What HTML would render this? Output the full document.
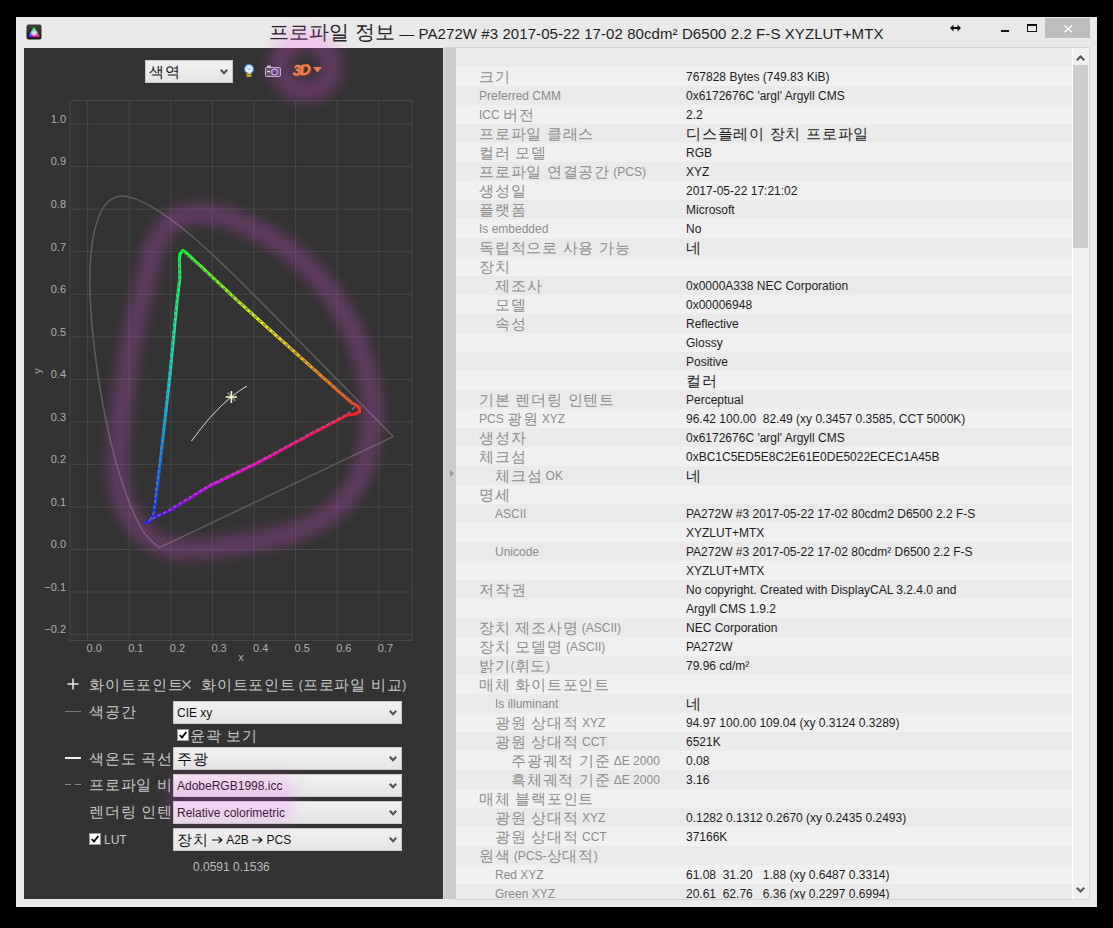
<!DOCTYPE html>
<html><head><meta charset="utf-8">
<style>
html,body{margin:0;padding:0;}
body{width:1113px;height:928px;background:#000;position:relative;overflow:hidden;font-family:"Liberation Sans",sans-serif;}
.abs{position:absolute;}
#win{left:16px;top:17px;width:1081px;height:890px;background:#e9e9e9;}
#title{left:0;top:17px;width:1113px;height:31px;}
#title .t{position:absolute;left:269px;top:8px;letter-spacing:0.08px;font-size:15px;color:#1e1e1e;white-space:pre;line-height:18px;}
.k{font-size:15px;letter-spacing:0.75px;line-height:1px;position:relative;top:1px;}
.kt{font-size:20px;letter-spacing:0.05px;line-height:1px;position:relative;top:0px;}
#left{left:24px;top:48px;width:419px;height:851px;background:#333333;overflow:hidden;}
#split{left:443px;top:47px;width:13px;height:852px;border-top:1px solid #d5d5d5;background:#cccccc;border-left:1px solid #d8d8d8;box-sizing:border-box;}
#list{left:456px;top:47px;width:634px;height:853px;background:#f0f0f0;border-top:1px solid #d5d5d5;border-right:1px solid #d5d5d5;border-bottom:1px solid #d5d5d5;box-sizing:border-box;overflow:hidden;}
.row{position:absolute;left:0;width:616px;height:19px;font-size:12px;line-height:19px;white-space:pre;}
.row.o{background:#eaeaea;}
.row .l{position:absolute;color:#8c8c8c;top:1px;}
.row .v{position:absolute;left:230px;color:#1c1c1c;top:1px;}
#sb{left:1072px;top:48px;width:17px;height:851px;background:#f0f0f0;border-left:1px solid #ffffff;box-sizing:border-box;}
.dd{position:absolute;height:23px;background:linear-gradient(#f2f2f2,#e4e4e4);box-shadow:inset 0 0 0 1px #c8c8c8;font-size:12px;line-height:24px;color:#111;white-space:pre;box-sizing:border-box;padding-left:4px;}
.dd svg.chev{position:absolute;right:5px;top:9px;}
.lab{position:absolute;font-size:12px;color:#c9c9c9;white-space:pre;line-height:16px;}
svg text{font-family:"Liberation Sans",sans-serif;}
</style></head><body>
<div id="win" class="abs"></div>
<div id="title" class="abs">
  <svg class="abs" style="left:26px;top:7px" width="16" height="16" viewBox="0 0 16 16">
    <defs>
      <linearGradient id="ig" x1="0" y1="0" x2="0" y2="1"><stop offset="0" stop-color="#404040"/><stop offset="1" stop-color="#1c1c1c"/></linearGradient>
      <linearGradient id="gR" gradientUnits="userSpaceOnUse" x1="14.5" y1="13" x2="5" y2="7.5"><stop offset="0" stop-color="#ff0000"/><stop offset="0.55" stop-color="#c00060"/><stop offset="1" stop-color="#000000"/></linearGradient>
      <linearGradient id="gG" gradientUnits="userSpaceOnUse" x1="8" y1="2.5" x2="8" y2="13"><stop offset="0" stop-color="#00ff00"/><stop offset="0.55" stop-color="#00c080"/><stop offset="1" stop-color="#000000"/></linearGradient>
      <linearGradient id="gB" gradientUnits="userSpaceOnUse" x1="1.5" y1="13" x2="11" y2="7.5"><stop offset="0" stop-color="#0000ff"/><stop offset="0.55" stop-color="#6000c0"/><stop offset="1" stop-color="#000000"/></linearGradient>
    </defs>
    <rect x="0.5" y="0.5" width="15" height="15" rx="2" fill="url(#ig)"/>
    <g style="isolation:isolate">
    <path d="M8,2.5 L14.5,13 L1.5,13 Z" fill="#000"/>
    <path d="M8,2.5 L14.5,13 L1.5,13 Z" fill="url(#gR)" style="mix-blend-mode:screen"/>
    <path d="M8,2.5 L14.5,13 L1.5,13 Z" fill="url(#gG)" style="mix-blend-mode:screen"/>
    <path d="M8,2.5 L14.5,13 L1.5,13 Z" fill="url(#gB)" style="mix-blend-mode:screen"/>
    </g>
    <radialGradient id="gW" cx="8" cy="9.3" r="3.2" gradientUnits="userSpaceOnUse"><stop offset="0" stop-color="#fff" stop-opacity="0.95"/><stop offset="1" stop-color="#fff" stop-opacity="0"/></radialGradient>
    <circle cx="8" cy="9.3" r="3.2" fill="url(#gW)"/>
  </svg>
  <div class="t"><span class="kt">프로파일 정보</span> — PA272W #3 2017-05-22 17-02 80cdm² D6500 2.2 F-S XYZLUT+MTX</div>
  <svg class="abs" style="left:950px;top:7px" width="11" height="8" viewBox="0 0 11 8"><path d="M0,4 L3.5,0.5 L3.5,3 L7.5,3 L7.5,0.5 L11,4 L7.5,7.5 L7.5,5 L3.5,5 L3.5,7.5 Z" fill="#111"/></svg>
  <div class="abs" style="left:1001px;top:13px;width:8px;height:2px;background:#111;"></div>
  <div class="abs" style="left:1027px;top:7px;width:10px;height:8px;border:1px solid #111;border-top-width:2px;box-sizing:border-box;"></div>
  <div class="abs" style="left:1045px;top:1px;width:45px;height:20px;background:#bdbdbd;"></div>
  <svg class="abs" style="left:1064px;top:8px" width="9" height="8" viewBox="0 0 9 8"><path d="M0.5,0.5 L8,7.3 M8,0.5 L0.5,7.3" stroke="#fff" stroke-width="1.2"/></svg>
</div>
<div id="left" class="abs">
  <svg class="abs" style="left:-24px;top:-48px" width="1113" height="928" viewBox="0 0 1113 928">
    <rect x="70" y="100.5" width="342" height="540" fill="none" stroke="#474747" stroke-width="1"/>
    <g stroke="#474747" stroke-width="1"><line x1="87.6" y1="100.5" x2="87.6" y2="640.5"/><line x1="129.2" y1="100.5" x2="129.2" y2="640.5"/><line x1="170.8" y1="100.5" x2="170.8" y2="640.5"/><line x1="212.4" y1="100.5" x2="212.4" y2="640.5"/><line x1="254.0" y1="100.5" x2="254.0" y2="640.5"/><line x1="295.6" y1="100.5" x2="295.6" y2="640.5"/><line x1="337.2" y1="100.5" x2="337.2" y2="640.5"/><line x1="378.8" y1="100.5" x2="378.8" y2="640.5"/><line x1="70.5" y1="634.6" x2="412" y2="634.6"/><line x1="70.5" y1="592.0" x2="412" y2="592.0"/><line x1="70.5" y1="549.5" x2="412" y2="549.5"/><line x1="70.5" y1="507.0" x2="412" y2="507.0"/><line x1="70.5" y1="464.4" x2="412" y2="464.4"/><line x1="70.5" y1="421.9" x2="412" y2="421.9"/><line x1="70.5" y1="379.3" x2="412" y2="379.3"/><line x1="70.5" y1="336.8" x2="412" y2="336.8"/><line x1="70.5" y1="294.3" x2="412" y2="294.3"/><line x1="70.5" y1="251.7" x2="412" y2="251.7"/><line x1="70.5" y1="209.2" x2="412" y2="209.2"/><line x1="70.5" y1="166.6" x2="412" y2="166.6"/><line x1="70.5" y1="124.1" x2="412" y2="124.1"/></g>
    <g fill="#b0b0b0" font-size="11"><text x="66" y="633.4" text-anchor="end">−0.2</text><text x="66" y="590.8" text-anchor="end">−0.1</text><text x="66" y="548.3" text-anchor="end">0.0</text><text x="66" y="505.8" text-anchor="end">0.1</text><text x="66" y="463.2" text-anchor="end">0.2</text><text x="66" y="420.7" text-anchor="end">0.3</text><text x="66" y="378.1" text-anchor="end">0.4</text><text x="66" y="335.6" text-anchor="end">0.5</text><text x="66" y="293.1" text-anchor="end">0.6</text><text x="66" y="250.5" text-anchor="end">0.7</text><text x="66" y="208.0" text-anchor="end">0.8</text><text x="66" y="165.4" text-anchor="end">0.9</text><text x="66" y="122.9" text-anchor="end">1.0</text><text x="86.6" y="651.5">0.0</text><text x="128.2" y="651.5">0.1</text><text x="169.8" y="651.5">0.2</text><text x="211.4" y="651.5">0.3</text><text x="253.0" y="651.5">0.4</text><text x="294.6" y="651.5">0.5</text><text x="336.2" y="651.5">0.6</text><text x="377.8" y="651.5">0.7</text></g>
    <text x="241" y="661" fill="#a8a8a8" font-size="11" text-anchor="middle">x</text>
    <text transform="translate(41,371) rotate(-90)" fill="#a8a8a8" font-size="11" text-anchor="middle">y</text>
    <path d="M160.0,547.4 Q160.0,547.4 159.9,547.4 Q159.9,547.4 159.9,547.4 Q159.8,547.4 159.8,547.4 Q159.7,547.5 159.6,547.5 Q159.6,547.5 159.5,547.5 Q159.4,547.5 159.3,547.5 Q159.2,547.5 159.0,547.4 Q158.9,547.3 158.7,547.2 Q158.4,547.0 158.2,546.8 Q157.9,546.6 157.4,546.2 Q157.0,545.8 156.5,545.4 Q156.0,544.9 155.3,544.2 Q154.6,543.6 153.7,542.8 Q152.7,542.0 151.6,540.9 Q150.4,539.8 149.0,538.4 Q147.5,536.9 145.7,534.7 Q144.0,532.5 141.6,528.7 Q139.2,524.9 136.2,518.7 Q133.2,512.6 129.4,502.8 Q125.6,493.0 120.9,478.6 Q116.2,464.1 111.3,444.1 Q106.5,424.0 101.9,399.0 Q97.4,373.9 94.2,347.2 Q91.0,320.5 90.1,295.7 Q89.2,270.9 91.3,250.7 Q93.4,230.4 98.6,217.2 Q103.8,204.1 111.1,199.4 Q118.5,194.8 126.8,196.4 Q135.1,198.0 143.5,202.4 Q152.0,206.7 159.9,211.8 Q167.8,217.0 175.5,222.8 Q183.1,228.6 190.6,235.0 Q198.2,241.4 205.6,248.2 Q213.1,255.0 220.5,262.1 Q227.9,269.2 235.4,276.5 Q242.8,283.8 250.2,291.3 Q257.6,298.7 265.0,306.1 Q272.3,313.5 279.6,320.9 Q286.8,328.2 293.8,335.4 Q300.8,342.5 307.5,349.3 Q314.2,356.2 320.6,362.6 Q326.9,369.0 332.6,374.9 Q338.4,380.8 343.4,385.9 Q348.4,391.0 352.8,395.5 Q357.3,400.0 360.9,403.7 Q364.6,407.4 367.5,410.5 Q370.5,413.5 372.9,415.9 Q375.3,418.3 377.2,420.3 Q379.0,422.2 380.6,423.7 Q382.1,425.3 383.4,426.6 Q384.6,427.9 385.7,428.9 Q386.7,430.0 387.5,430.8 Q388.4,431.7 389.0,432.3 Q389.6,432.9 390.4,433.8 Q391.3,434.6 391.7,435.1 Q392.1,435.5 392.4,435.8 Q392.7,436.1 393.0,436.4 L393.2,436.6 Z" fill="none" stroke="#5e5e5e" stroke-width="1.5" stroke-linejoin="round"/>
    <path d="M191.5,441.1 L192.4,439.9 L193.4,438.6 L194.3,437.2 L195.3,435.9 L196.4,434.5 L197.5,433.0 L198.6,431.6 L199.7,430.1 L200.9,428.6 L202.1,427.1 L203.4,425.5 L204.7,424.0 L206.0,422.4 L207.3,420.8 L208.7,419.2 L210.1,417.6 L211.5,416.0 L213.0,414.4 L214.5,412.8 L216.0,411.3 L217.5,409.7 L219.0,408.1 L220.6,406.6 L222.2,405.1 L223.8,403.6 L225.4,402.1 L227.0,400.7 L228.6,399.3 L230.3,397.9 L231.9,396.5 L233.5,395.2 L235.2,394.0 L236.8,392.7 L238.5,391.5 L240.1,390.4 L241.8,389.3 L243.4,388.2 L245.0,387.2 L246.7,386.2" fill="none" stroke="#e8e8e8" stroke-width="1"/>
    <g stroke-width="3" stroke-linecap="round"><line x1="182.8" y1="250.5" x2="186.3" y2="252.8" stroke="#05ff26"/><line x1="186.3" y1="252.8" x2="189.4" y2="255.7" stroke="#0eff23"/><line x1="189.4" y1="255.7" x2="192.5" y2="258.6" stroke="#17ff20"/><line x1="192.5" y1="258.6" x2="195.6" y2="261.5" stroke="#20ff1d"/><line x1="195.6" y1="261.5" x2="198.7" y2="264.4" stroke="#29ff1a"/><line x1="198.7" y1="264.4" x2="201.8" y2="267.2" stroke="#32ff17"/><line x1="201.8" y1="267.2" x2="204.9" y2="270.1" stroke="#3bff14"/><line x1="204.9" y1="270.1" x2="207.9" y2="273.0" stroke="#44ff11"/><line x1="207.9" y1="273.0" x2="211.0" y2="275.9" stroke="#4dff0e"/><line x1="211.0" y1="275.9" x2="214.1" y2="278.8" stroke="#56ff0b"/><line x1="214.1" y1="278.8" x2="217.2" y2="281.7" stroke="#5fff08"/><line x1="217.2" y1="281.7" x2="220.3" y2="284.6" stroke="#69ff05"/><line x1="220.3" y1="284.6" x2="223.4" y2="287.4" stroke="#72ff02"/><line x1="223.4" y1="287.4" x2="226.5" y2="290.3" stroke="#7bff00"/><line x1="226.5" y1="290.3" x2="229.5" y2="293.2" stroke="#84fe00"/><line x1="229.5" y1="293.2" x2="232.6" y2="296.1" stroke="#8efd00"/><line x1="232.6" y1="296.1" x2="235.7" y2="299.0" stroke="#98fc00"/><line x1="235.7" y1="299.0" x2="238.8" y2="301.9" stroke="#a1fb00"/><line x1="238.8" y1="301.9" x2="241.9" y2="304.7" stroke="#abfb00"/><line x1="241.9" y1="304.7" x2="245.1" y2="307.5" stroke="#b4fa00"/><line x1="245.1" y1="307.5" x2="248.2" y2="310.4" stroke="#bef900"/><line x1="248.2" y1="310.4" x2="251.4" y2="313.2" stroke="#c8f800"/><line x1="251.4" y1="313.2" x2="254.5" y2="316.0" stroke="#d1f700"/><line x1="254.5" y1="316.0" x2="257.7" y2="318.8" stroke="#dbf600"/><line x1="257.7" y1="318.8" x2="260.8" y2="321.7" stroke="#e4f600"/><line x1="260.8" y1="321.7" x2="264.0" y2="324.5" stroke="#ecf400"/><line x1="264.0" y1="324.5" x2="267.1" y2="327.3" stroke="#edef00"/><line x1="267.1" y1="327.3" x2="270.2" y2="330.1" stroke="#efea00"/><line x1="270.2" y1="330.1" x2="273.4" y2="332.9" stroke="#f0e600"/><line x1="273.4" y1="332.9" x2="276.5" y2="335.8" stroke="#f2e100"/><line x1="276.5" y1="335.8" x2="279.7" y2="338.6" stroke="#f4dd00"/><line x1="279.7" y1="338.6" x2="282.8" y2="341.4" stroke="#f6d800"/><line x1="282.8" y1="341.4" x2="286.0" y2="344.2" stroke="#f7d400"/><line x1="286.0" y1="344.2" x2="289.1" y2="347.0" stroke="#f9cf00"/><line x1="289.1" y1="347.0" x2="292.3" y2="349.9" stroke="#faca00"/><line x1="292.3" y1="349.9" x2="295.4" y2="352.7" stroke="#fcc600"/><line x1="295.4" y1="352.7" x2="298.6" y2="355.5" stroke="#fec100"/><line x1="298.6" y1="355.5" x2="301.7" y2="358.3" stroke="#ffbc00"/><line x1="301.7" y1="358.3" x2="304.9" y2="361.1" stroke="#ffb500"/><line x1="304.9" y1="361.1" x2="308.0" y2="364.0" stroke="#ffad00"/><line x1="308.0" y1="364.0" x2="311.2" y2="366.8" stroke="#ffa600"/><line x1="311.2" y1="366.8" x2="314.3" y2="369.6" stroke="#ff9f00"/><line x1="314.3" y1="369.6" x2="317.5" y2="372.4" stroke="#ff9800"/><line x1="317.5" y1="372.4" x2="320.6" y2="375.3" stroke="#ff9000"/><line x1="320.6" y1="375.3" x2="323.7" y2="378.1" stroke="#ff8900"/><line x1="323.7" y1="378.1" x2="326.9" y2="380.9" stroke="#ff8200"/><line x1="326.9" y1="380.9" x2="330.1" y2="383.7" stroke="#ff7b00"/><line x1="330.1" y1="383.7" x2="333.2" y2="386.5" stroke="#ff7300"/><line x1="333.2" y1="386.5" x2="336.4" y2="389.3" stroke="#ff6c00"/><line x1="336.4" y1="389.3" x2="339.6" y2="392.1" stroke="#ff6500"/><line x1="339.6" y1="392.1" x2="342.8" y2="394.9" stroke="#ff5e00"/><line x1="342.8" y1="394.9" x2="345.9" y2="397.6" stroke="#ff5602"/><line x1="345.9" y1="397.6" x2="349.1" y2="400.4" stroke="#ff4e05"/><line x1="349.1" y1="400.4" x2="352.3" y2="403.2" stroke="#ff4708"/><line x1="352.3" y1="403.2" x2="356.1" y2="405.0" stroke="#ff3f0c"/><line x1="356.1" y1="405.0" x2="359.3" y2="407.8" stroke="#ff370f"/><line x1="359.3" y1="407.8" x2="359.5" y2="411.7" stroke="#ff2f12"/><line x1="359.5" y1="411.7" x2="356.0" y2="413.7" stroke="#ff2716"/><line x1="356.0" y1="413.7" x2="351.9" y2="414.5" stroke="#ff2019"/><line x1="351.9" y1="414.5" x2="347.7" y2="414.9" stroke="#ff181c"/><line x1="347.7" y1="414.9" x2="344.3" y2="416.7" stroke="#ff142b"/><line x1="344.3" y1="416.7" x2="341.0" y2="418.4" stroke="#ff1331"/><line x1="341.0" y1="418.4" x2="337.6" y2="420.2" stroke="#ff1236"/><line x1="337.6" y1="420.2" x2="334.2" y2="422.0" stroke="#ff113c"/><line x1="334.2" y1="422.0" x2="330.8" y2="423.8" stroke="#ff1042"/><line x1="330.8" y1="423.8" x2="327.5" y2="425.5" stroke="#ff0f47"/><line x1="327.5" y1="425.5" x2="324.1" y2="427.3" stroke="#ff0e4d"/><line x1="324.1" y1="427.3" x2="320.7" y2="429.1" stroke="#ff0d53"/><line x1="320.7" y1="429.1" x2="317.4" y2="430.8" stroke="#ff0c59"/><line x1="317.4" y1="430.8" x2="314.0" y2="432.6" stroke="#ff0b5e"/><line x1="314.0" y1="432.6" x2="310.6" y2="434.4" stroke="#ff0a64"/><line x1="310.6" y1="434.4" x2="307.2" y2="436.2" stroke="#ff096a"/><line x1="307.2" y1="436.2" x2="303.9" y2="438.0" stroke="#ff086f"/><line x1="303.9" y1="438.0" x2="300.5" y2="439.8" stroke="#ff0775"/><line x1="300.5" y1="439.8" x2="297.2" y2="441.6" stroke="#ff067b"/><line x1="297.2" y1="441.6" x2="293.8" y2="443.4" stroke="#ff0581"/><line x1="293.8" y1="443.4" x2="290.5" y2="445.2" stroke="#ff0486"/><line x1="290.5" y1="445.2" x2="287.1" y2="447.0" stroke="#ff038c"/><line x1="287.1" y1="447.0" x2="283.8" y2="448.8" stroke="#ff0292"/><line x1="283.8" y1="448.8" x2="280.4" y2="450.7" stroke="#ff0197"/><line x1="280.4" y1="450.7" x2="277.1" y2="452.5" stroke="#ff009d"/><line x1="277.1" y1="452.5" x2="273.7" y2="454.3" stroke="#fe00a2"/><line x1="273.7" y1="454.3" x2="270.4" y2="456.1" stroke="#fc00a7"/><line x1="270.4" y1="456.1" x2="267.0" y2="457.9" stroke="#fb00ab"/><line x1="267.0" y1="457.9" x2="263.7" y2="459.7" stroke="#f900b0"/><line x1="263.7" y1="459.7" x2="260.3" y2="461.5" stroke="#f800b4"/><line x1="260.3" y1="461.5" x2="256.9" y2="463.2" stroke="#f600b8"/><line x1="256.9" y1="463.2" x2="253.5" y2="464.9" stroke="#f400bd"/><line x1="253.5" y1="464.9" x2="250.1" y2="466.5" stroke="#f200c1"/><line x1="250.1" y1="466.5" x2="246.6" y2="468.2" stroke="#f100c6"/><line x1="246.6" y1="468.2" x2="243.2" y2="469.8" stroke="#ef00ca"/><line x1="243.2" y1="469.8" x2="239.8" y2="471.5" stroke="#ee00cf"/><line x1="239.8" y1="471.5" x2="236.3" y2="473.1" stroke="#ec00d3"/><line x1="236.3" y1="473.1" x2="232.9" y2="474.8" stroke="#ea00d8"/><line x1="232.9" y1="474.8" x2="229.5" y2="476.4" stroke="#e800dc"/><line x1="229.5" y1="476.4" x2="226.0" y2="478.1" stroke="#e700e0"/><line x1="226.0" y1="478.1" x2="222.6" y2="479.7" stroke="#e500e5"/><line x1="222.6" y1="479.7" x2="219.2" y2="481.4" stroke="#e400e9"/><line x1="219.2" y1="481.4" x2="215.7" y2="483.0" stroke="#e200ee"/><line x1="215.7" y1="483.0" x2="212.3" y2="484.7" stroke="#dd00f1"/><line x1="212.3" y1="484.7" x2="208.9" y2="486.4" stroke="#d600f2"/><line x1="208.9" y1="486.4" x2="205.7" y2="488.4" stroke="#cf00f3"/><line x1="205.7" y1="488.4" x2="202.4" y2="490.4" stroke="#c800f4"/><line x1="202.4" y1="490.4" x2="199.2" y2="492.4" stroke="#c100f5"/><line x1="199.2" y1="492.4" x2="196.0" y2="494.4" stroke="#ba00f6"/><line x1="196.0" y1="494.4" x2="192.7" y2="496.4" stroke="#b300f7"/><line x1="192.7" y1="496.4" x2="189.5" y2="498.5" stroke="#ac00f8"/><line x1="189.5" y1="498.5" x2="186.3" y2="500.5" stroke="#a500f9"/><line x1="186.3" y1="500.5" x2="183.1" y2="502.5" stroke="#9e00fa"/><line x1="183.1" y1="502.5" x2="179.8" y2="504.5" stroke="#9700fb"/><line x1="179.8" y1="504.5" x2="176.6" y2="506.5" stroke="#9000fc"/><line x1="176.6" y1="506.5" x2="173.4" y2="508.6" stroke="#8900fe"/><line x1="173.4" y1="508.6" x2="170.1" y2="510.6" stroke="#8200ff"/><line x1="170.1" y1="510.6" x2="166.7" y2="512.2" stroke="#7503ff"/><line x1="166.7" y1="512.2" x2="163.2" y2="513.7" stroke="#6707ff"/><line x1="163.2" y1="513.7" x2="159.7" y2="515.2" stroke="#570bff"/><line x1="159.7" y1="515.2" x2="156.2" y2="516.7" stroke="#490fff"/><line x1="156.2" y1="516.7" x2="152.8" y2="518.5" stroke="#3914ff"/><line x1="152.8" y1="518.5" x2="149.7" y2="520.6" stroke="#2b18ff"/><line x1="149.7" y1="520.6" x2="146.5" y2="522.7" stroke="#1b1cff"/><line x1="146.5" y1="522.7" x2="150.5" y2="520.3" stroke="#1321ff"/><line x1="150.5" y1="520.3" x2="152.9" y2="516.4" stroke="#1227ff"/><line x1="152.9" y1="516.4" x2="154.4" y2="512.2" stroke="#112dff"/><line x1="154.4" y1="512.2" x2="154.9" y2="507.5" stroke="#0f33ff"/><line x1="154.9" y1="507.5" x2="155.5" y2="502.9" stroke="#0e39ff"/><line x1="155.5" y1="502.9" x2="156.0" y2="498.3" stroke="#0d3fff"/><line x1="156.0" y1="498.3" x2="156.5" y2="493.7" stroke="#0b45ff"/><line x1="156.5" y1="493.7" x2="157.1" y2="489.1" stroke="#0a4bff"/><line x1="157.1" y1="489.1" x2="157.6" y2="484.5" stroke="#0951ff"/><line x1="157.6" y1="484.5" x2="158.1" y2="479.9" stroke="#0757ff"/><line x1="158.1" y1="479.9" x2="158.7" y2="475.3" stroke="#065dff"/><line x1="158.7" y1="475.3" x2="159.2" y2="470.7" stroke="#0563ff"/><line x1="159.2" y1="470.7" x2="159.7" y2="466.1" stroke="#0369ff"/><line x1="159.7" y1="466.1" x2="160.3" y2="461.5" stroke="#026fff"/><line x1="160.3" y1="461.5" x2="160.8" y2="456.9" stroke="#0175ff"/><line x1="160.8" y1="456.9" x2="161.3" y2="452.3" stroke="#007bfe"/><line x1="161.3" y1="452.3" x2="161.8" y2="447.7" stroke="#0081fc"/><line x1="161.8" y1="447.7" x2="162.4" y2="443.1" stroke="#0087fb"/><line x1="162.4" y1="443.1" x2="162.9" y2="438.5" stroke="#008df9"/><line x1="162.9" y1="438.5" x2="163.4" y2="433.9" stroke="#0093f8"/><line x1="163.4" y1="433.9" x2="163.9" y2="429.3" stroke="#0099f6"/><line x1="163.9" y1="429.3" x2="164.4" y2="424.6" stroke="#009ff4"/><line x1="164.4" y1="424.6" x2="164.9" y2="420.0" stroke="#00a5f2"/><line x1="164.9" y1="420.0" x2="165.4" y2="415.4" stroke="#00abf1"/><line x1="165.4" y1="415.4" x2="166.0" y2="410.8" stroke="#00b1ef"/><line x1="166.0" y1="410.8" x2="166.5" y2="406.2" stroke="#00b7ee"/><line x1="166.5" y1="406.2" x2="167.0" y2="401.6" stroke="#00bdec"/><line x1="167.0" y1="401.6" x2="167.5" y2="397.0" stroke="#00c3ea"/><line x1="167.5" y1="397.0" x2="168.0" y2="392.4" stroke="#00c9e8"/><line x1="168.0" y1="392.4" x2="168.5" y2="387.8" stroke="#00cfe7"/><line x1="168.5" y1="387.8" x2="169.0" y2="383.2" stroke="#00d4e3"/><line x1="169.0" y1="383.2" x2="169.5" y2="378.6" stroke="#00d6dd"/><line x1="169.5" y1="378.6" x2="170.0" y2="374.0" stroke="#00dad7"/><line x1="170.0" y1="374.0" x2="170.4" y2="369.3" stroke="#00dcd1"/><line x1="170.4" y1="369.3" x2="170.9" y2="364.7" stroke="#00e0cb"/><line x1="170.9" y1="364.7" x2="171.3" y2="360.1" stroke="#00e2c5"/><line x1="171.3" y1="360.1" x2="171.8" y2="355.5" stroke="#00e6bf"/><line x1="171.8" y1="355.5" x2="172.2" y2="350.9" stroke="#00e8b9"/><line x1="172.2" y1="350.9" x2="172.7" y2="346.3" stroke="#00ecb3"/><line x1="172.7" y1="346.3" x2="173.1" y2="341.7" stroke="#00eead"/><line x1="173.1" y1="341.7" x2="173.6" y2="337.0" stroke="#00f2a7"/><line x1="173.6" y1="337.0" x2="174.0" y2="332.4" stroke="#00f4a1"/><line x1="174.0" y1="332.4" x2="174.5" y2="327.8" stroke="#00f89b"/><line x1="174.5" y1="327.8" x2="174.9" y2="323.2" stroke="#00fa95"/><line x1="174.9" y1="323.2" x2="175.4" y2="318.6" stroke="#00fe8f"/><line x1="175.4" y1="318.6" x2="175.8" y2="314.0" stroke="#00ff89"/><line x1="175.8" y1="314.0" x2="176.3" y2="309.4" stroke="#00ff82"/><line x1="176.3" y1="309.4" x2="176.7" y2="304.8" stroke="#00ff7b"/><line x1="176.7" y1="304.8" x2="177.2" y2="300.1" stroke="#00ff75"/><line x1="177.2" y1="300.1" x2="177.7" y2="295.5" stroke="#00ff6e"/><line x1="177.7" y1="295.5" x2="178.3" y2="290.9" stroke="#00ff67"/><line x1="178.3" y1="290.9" x2="178.8" y2="286.3" stroke="#00ff61"/><line x1="178.8" y1="286.3" x2="179.4" y2="281.7" stroke="#00ff5a"/><line x1="179.4" y1="281.7" x2="179.8" y2="277.1" stroke="#00ff53"/><line x1="179.8" y1="277.1" x2="179.7" y2="272.5" stroke="#00ff4d"/><line x1="179.7" y1="272.5" x2="179.6" y2="267.8" stroke="#00ff46"/><line x1="179.6" y1="267.8" x2="179.5" y2="263.2" stroke="#00ff3f"/><line x1="179.5" y1="263.2" x2="179.4" y2="258.6" stroke="#00ff39"/><line x1="179.4" y1="258.6" x2="180.1" y2="254.0" stroke="#00ff32"/><line x1="180.1" y1="254.0" x2="182.8" y2="250.5" stroke="#00ff2b"/></g>
    <path d="M182.8,251.5 L240,303 L326.9,380.9 L356,405.5 L348,413.8 L308.1,434.7 L258.7,461.4 L209.3,485.1 L169.8,509.8 L150,520 L153.5,513 L162,442 L169,378 L176.5,300 L179,278 L179.5,258" fill="none" stroke="#76767e" stroke-width="1.5" stroke-dasharray="3.5 2.5"/>
    <g stroke-width="1.6"><line x1="227.5" y1="392.5" x2="235.5" y2="401" stroke="#8a8a80"/><line x1="225.8" y1="397" x2="237" y2="397" stroke="#f6f2cc"/><line x1="231.4" y1="391" x2="231.4" y2="403" stroke="#f6f2cc"/></g>
  </svg>
  <div class="dd" style="left:121px;top:12px;width:88px;height:23px"><span class="k">색역</span><svg class="chev" width="8" height="6" viewBox="0 0 8 6"><path d="M0.8,0.8 L4,4.2 L7.2,0.8" fill="none" stroke="#505050" stroke-width="2"/></svg></div><svg class="abs" style="left:219px;top:16px" width="12" height="14" viewBox="0 0 12 14"><circle cx="6" cy="5" r="4.5" fill="#e8f2ff" stroke="#3a7ee0" stroke-width="1.2"/><path d="M4,3.5 L6,6 L8,3.5" fill="none" stroke="#7aa8e8" stroke-width="0.9"/><rect x="3.5" y="9" width="5" height="1.6" fill="#e0c020"/><rect x="3.5" y="11.2" width="5" height="1.6" fill="#e0c020"/></svg><svg class="abs" style="left:241px;top:17px" width="16" height="12" viewBox="0 0 16 12"><rect x="0.5" y="2.5" width="15" height="9" rx="1" fill="#5c5464" stroke="#c4bccb" stroke-width="1"/><rect x="2" y="0.5" width="4" height="2" fill="#c4bccb"/><rect x="2" y="6" width="3" height="1.2" fill="#e0e0e0"/><circle cx="9.5" cy="7" r="3.3" fill="#d8d0e0"/><circle cx="9.5" cy="7" r="2.2" fill="#2a2450"/><circle cx="9.2" cy="6.6" r="0.9" fill="#6a78ff"/></svg><div class="abs" style="left:269px;top:13px;font-size:15px;font-weight:bold;color:#f58a4a;letter-spacing:-1.5px;transform:skewX(-12deg) rotate(-4deg);text-shadow:1px 1px 0 #b04a18;">3D</div><svg class="abs" style="left:289px;top:19px" width="9" height="6" viewBox="0 0 9 6"><path d="M0,0 L9,0 L4.5,5.5Z" fill="#f08040"/></svg><svg class="abs" style="left:43px;top:630px" width="12" height="12" viewBox="0 0 12 12"><path d="M6,0.5 V11.5 M0.5,6 H11.5" stroke="#e8e8e8" stroke-width="1.6"/></svg><div class="lab" style="left:65px;top:629px;color:#c9c9c9"><span class="k">화이트포인트</span></div><svg class="abs" style="left:158px;top:632px" width="9" height="9" viewBox="0 0 9 9"><path d="M0.5,0.5 L8.5,8.5 M8.5,0.5 L0.5,8.5" stroke="#c0c0c0" stroke-width="1.2"/></svg><div class="lab" style="left:177px;top:629px;color:#c9c9c9"><span class="k">화이트포인트</span> (<span class="k">프로파일 비교</span>)</div><div class="abs" style="left:41px;top:663px;width:16px;height:1px;background:#7a7a7a"></div><div class="lab" style="left:65px;top:656px;color:#c9c9c9"><span class="k">색공간</span></div><div class="dd" style="left:149px;top:653px;width:229px;height:23px">CIE xy<svg class="chev" width="8" height="6" viewBox="0 0 8 6"><path d="M0.8,0.8 L4,4.2 L7.2,0.8" fill="none" stroke="#505050" stroke-width="2"/></svg></div><div class="abs" style="left:154px;top:682px;width:10px;height:10px;background:#fff;box-shadow:0 0 0 1px #999"><svg width="10" height="10" viewBox="0 0 10 10" style="position:absolute;left:0;top:0"><path d="M1.8,5 L4,7.5 L8.3,2" fill="none" stroke="#000" stroke-width="1.8"/></svg></div><div class="lab" style="left:166px;top:680px;color:#c9c9c9"><span class="k">윤곽 보기</span></div><div class="abs" style="left:41px;top:709px;width:16px;height:2px;background:#f0f0f0"></div><div class="lab" style="left:65px;top:703px;color:#c9c9c9"><span class="k">색온도 곡선</span></div><div class="dd" style="left:149px;top:699px;width:229px;height:23px"><span class="k">주광</span><svg class="chev" width="8" height="6" viewBox="0 0 8 6"><path d="M0.8,0.8 L4,4.2 L7.2,0.8" fill="none" stroke="#505050" stroke-width="2"/></svg></div><div class="abs" style="left:41px;top:736px;width:6px;height:1px;background:#8a8a8a"></div><div class="abs" style="left:51px;top:736px;width:6px;height:1px;background:#8a8a8a"></div><div class="lab" style="left:65px;top:729px;color:#c9c9c9"><span class="k">프로파일 비교</span></div><div class="dd" style="left:149px;top:726px;width:229px;height:23px">AdobeRGB1998.icc<svg class="chev" width="8" height="6" viewBox="0 0 8 6"><path d="M0.8,0.8 L4,4.2 L7.2,0.8" fill="none" stroke="#505050" stroke-width="2"/></svg></div><div class="lab" style="left:65px;top:756px;color:#c9c9c9"><span class="k">렌더링 인텐트</span></div><div class="dd" style="left:149px;top:753px;width:229px;height:23px">Relative colorimetric<svg class="chev" width="8" height="6" viewBox="0 0 8 6"><path d="M0.8,0.8 L4,4.2 L7.2,0.8" fill="none" stroke="#505050" stroke-width="2"/></svg></div><div class="abs" style="left:66px;top:786px;width:10px;height:10px;background:#fff;box-shadow:0 0 0 1px #999"><svg width="10" height="10" viewBox="0 0 10 10" style="position:absolute;left:0;top:0"><path d="M1.8,5 L4,7.5 L8.3,2" fill="none" stroke="#000" stroke-width="1.8"/></svg></div><div class="lab" style="left:80px;top:784px;color:#c9c9c9">LUT</div><div class="dd" style="left:149px;top:780px;width:229px;height:23px"><span class="k">장치</span> <svg width="11" height="8" viewBox="0 0 11 8" style="vertical-align:0px"><path d="M0,4 H9.5 M6.5,1 L10,4 L6.5,7" fill="none" stroke="#111" stroke-width="1.1"/></svg> A2B <svg width="11" height="8" viewBox="0 0 11 8" style="vertical-align:0px"><path d="M0,4 H9.5 M6.5,1 L10,4 L6.5,7" fill="none" stroke="#111" stroke-width="1.1"/></svg> PCS<svg class="chev" width="8" height="6" viewBox="0 0 8 6"><path d="M0.8,0.8 L4,4.2 L7.2,0.8" fill="none" stroke="#505050" stroke-width="2"/></svg></div><div class="lab" style="left:169px;top:811px;color:#bdbdbd">0.0591 0.1536</div>
</div>
<div id="split" class="abs"><svg class="abs" style="left:6px;top:422px" width="4" height="7" viewBox="0 0 4 7"><path d="M0,0 L4,3.5 L0,7Z" fill="#9a9a9a"/></svg></div>
<div id="list" class="abs"><div class="row o" style="top:0"></div><div class="row" style="top:19px"><span class="l" style="left:23px"><span class="k">크기</span></span><span class="v">767828 Bytes (749.83 KiB)</span></div><div class="row o" style="top:38px"><span class="l" style="left:23px">Preferred CMM</span><span class="v">0x6172676C 'argl' Argyll CMS</span></div><div class="row" style="top:57px"><span class="l" style="left:23px">ICC <span class="k">버전</span></span><span class="v">2.2</span></div><div class="row o" style="top:76px"><span class="l" style="left:23px"><span class="k">프로파일 클래스</span></span><span class="v"><span class="k">디스플레이 장치 프로파일</span></span></div><div class="row" style="top:95px"><span class="l" style="left:23px"><span class="k">컬러 모델</span></span><span class="v">RGB</span></div><div class="row o" style="top:114px"><span class="l" style="left:23px"><span class="k">프로파일 연결공간</span> (PCS)</span><span class="v">XYZ</span></div><div class="row" style="top:133px"><span class="l" style="left:23px"><span class="k">생성일</span></span><span class="v">2017-05-22 17:21:02</span></div><div class="row o" style="top:152px"><span class="l" style="left:23px"><span class="k">플랫폼</span></span><span class="v">Microsoft</span></div><div class="row" style="top:171px"><span class="l" style="left:23px">Is embedded</span><span class="v">No</span></div><div class="row o" style="top:190px"><span class="l" style="left:23px"><span class="k">독립적으로 사용 가능</span></span><span class="v"><span class="k">네</span></span></div><div class="row" style="top:209px"><span class="l" style="left:23px"><span class="k">장치</span></span><span class="v"></span></div><div class="row o" style="top:228px"><span class="l" style="left:39px"><span class="k">제조사</span></span><span class="v">0x0000A338 NEC Corporation</span></div><div class="row" style="top:247px"><span class="l" style="left:39px"><span class="k">모델</span></span><span class="v">0x00006948</span></div><div class="row o" style="top:266px"><span class="l" style="left:39px"><span class="k">속성</span></span><span class="v">Reflective</span></div><div class="row" style="top:285px"><span class="l" style="left:39px"></span><span class="v">Glossy</span></div><div class="row o" style="top:304px"><span class="l" style="left:39px"></span><span class="v">Positive</span></div><div class="row" style="top:323px"><span class="l" style="left:39px"></span><span class="v"><span class="k">컬러</span></span></div><div class="row o" style="top:342px"><span class="l" style="left:23px"><span class="k">기본 렌더링 인텐트</span></span><span class="v">Perceptual</span></div><div class="row" style="top:361px"><span class="l" style="left:23px">PCS <span class="k">광원</span> XYZ</span><span class="v">96.42 100.00  82.49 (xy 0.3457 0.3585, CCT 5000K)</span></div><div class="row o" style="top:380px"><span class="l" style="left:23px"><span class="k">생성자</span></span><span class="v">0x6172676C 'argl' Argyll CMS</span></div><div class="row" style="top:399px"><span class="l" style="left:23px"><span class="k">체크섬</span></span><span class="v">0xBC1C5ED5E8C2E61E0DE5022ECEC1A45B</span></div><div class="row o" style="top:418px"><span class="l" style="left:39px"><span class="k">체크섬</span> OK</span><span class="v"><span class="k">네</span></span></div><div class="row" style="top:437px"><span class="l" style="left:23px"><span class="k">명세</span></span><span class="v"></span></div><div class="row o" style="top:456px"><span class="l" style="left:39px">ASCII</span><span class="v">PA272W #3 2017-05-22 17-02 80cdm2 D6500 2.2 F-S</span></div><div class="row" style="top:475px"><span class="l" style="left:39px"></span><span class="v">XYZLUT+MTX</span></div><div class="row o" style="top:494px"><span class="l" style="left:39px">Unicode</span><span class="v">PA272W #3 2017-05-22 17-02 80cdm² D6500 2.2 F-S</span></div><div class="row" style="top:513px"><span class="l" style="left:39px"></span><span class="v">XYZLUT+MTX</span></div><div class="row o" style="top:532px"><span class="l" style="left:23px"><span class="k">저작권</span></span><span class="v">No copyright. Created with DisplayCAL 3.2.4.0 and</span></div><div class="row" style="top:551px"><span class="l" style="left:23px"></span><span class="v">Argyll CMS 1.9.2</span></div><div class="row o" style="top:570px"><span class="l" style="left:23px"><span class="k">장치 제조사명</span> (ASCII)</span><span class="v">NEC Corporation</span></div><div class="row" style="top:589px"><span class="l" style="left:23px"><span class="k">장치 모델명</span> (ASCII)</span><span class="v">PA272W</span></div><div class="row o" style="top:608px"><span class="l" style="left:23px"><span class="k">밝기</span>(<span class="k">휘도</span>)</span><span class="v">79.96 cd/m²</span></div><div class="row" style="top:627px"><span class="l" style="left:23px"><span class="k">매체 화이트포인트</span></span><span class="v"></span></div><div class="row o" style="top:646px"><span class="l" style="left:39px">Is illuminant</span><span class="v"><span class="k">네</span></span></div><div class="row" style="top:665px"><span class="l" style="left:39px"><span class="k">광원 상대적</span> XYZ</span><span class="v">94.97 100.00 109.04 (xy 0.3124 0.3289)</span></div><div class="row o" style="top:684px"><span class="l" style="left:39px"><span class="k">광원 상대적</span> CCT</span><span class="v">6521K</span></div><div class="row" style="top:703px"><span class="l" style="left:55px"><span class="k">주광궤적 기준</span> ΔE 2000</span><span class="v">0.08</span></div><div class="row o" style="top:722px"><span class="l" style="left:55px"><span class="k">흑체궤적 기준</span> ΔE 2000</span><span class="v">3.16</span></div><div class="row" style="top:741px"><span class="l" style="left:23px"><span class="k">매체 블랙포인트</span></span><span class="v"></span></div><div class="row o" style="top:760px"><span class="l" style="left:39px"><span class="k">광원 상대적</span> XYZ</span><span class="v">0.1282 0.1312 0.2670 (xy 0.2435 0.2493)</span></div><div class="row" style="top:779px"><span class="l" style="left:39px"><span class="k">광원 상대적</span> CCT</span><span class="v">37166K</span></div><div class="row o" style="top:798px"><span class="l" style="left:23px"><span class="k">원색</span> (PCS-<span class="k">상대적</span>)</span><span class="v"></span></div><div class="row" style="top:817px"><span class="l" style="left:39px">Red XYZ</span><span class="v">61.08  31.20   1.88 (xy 0.6487 0.3314)</span></div><div class="row o" style="top:836px"><span class="l" style="left:39px">Green XYZ</span><span class="v">20.61  62.76   6.36 (xy 0.2297 0.6994)</span></div></div>
<div id="sb" class="abs">
  <svg class="abs" style="left:3px;top:7px" width="9" height="6" viewBox="0 0 9 6"><path d="M0.8,5.2 L4.5,1.5 L8.2,5.2" fill="none" stroke="#555" stroke-width="2"/></svg>
  <div class="abs" style="left:0;top:17px;width:15px;height:183px;background:#cdcdcd;"></div>
  <svg class="abs" style="left:3px;top:839px" width="9" height="6" viewBox="0 0 9 6"><path d="M0.8,0.8 L4.5,4.5 L8.2,0.8" fill="none" stroke="#555" stroke-width="2"/></svg>
</div>
<svg class="abs" style="left:0;top:0;pointer-events:none" width="1113" height="928" viewBox="0 0 1113 928">
  <defs>
    <filter id="blur1" x="-50%" y="-50%" width="200%" height="200%"><feGaussianBlur stdDeviation="6"/></filter>
    <filter id="blur2" x="-50%" y="-50%" width="200%" height="200%"><feGaussianBlur stdDeviation="7"/></filter>
    <filter id="blur3" x="-50%" y="-50%" width="200%" height="200%"><feGaussianBlur stdDeviation="5"/></filter>
  </defs>
  <path d="M191.4,214.1 L196.0,213.6 L201.0,213.6 L206.2,213.9 L211.4,214.5 L216.3,215.2 L220.7,215.9 L224.3,216.6 L227.3,217.4 L230.0,218.4 L232.8,219.5 L236.0,221.0 L240.0,222.8 L244.9,225.0 L250.4,227.4 L256.3,230.1 L262.4,233.1 L268.6,236.4 L274.5,240.0 L280.3,243.9 L286.3,248.2 L292.2,252.7 L298.0,257.5 L303.6,262.5 L309.0,267.6 L314.1,272.9 L319.0,278.4 L323.7,284.0 L328.2,289.9 L332.5,295.9 L336.6,302.0 L340.5,308.1 L344.2,314.2 L347.7,320.4 L351.0,326.9 L354.2,333.9 L357.2,341.7 L360.2,350.5 L363.3,360.1 L366.1,370.3 L368.7,380.6 L370.7,390.6 L372.0,400.0 L372.5,408.8 L372.4,417.3 L371.8,425.5 L370.7,433.4 L369.4,441.1 L368.0,448.5 L366.4,455.6 L364.7,462.5 L362.6,469.1 L360.3,475.4 L357.6,481.5 L354.4,487.3 L350.8,492.8 L346.8,498.2 L342.4,503.2 L337.7,507.9 L332.6,512.3 L327.3,516.4 L321.6,520.1 L315.4,523.4 L308.9,526.3 L302.2,529.0 L295.4,531.5 L288.5,533.8 L281.5,535.8 L274.4,537.6 L267.1,539.1 L259.8,540.5 L252.4,541.7 L245.0,543.0 L237.4,544.3 L229.6,545.5 L221.8,546.7 L214.1,547.7 L206.8,548.5 L200.0,549.0 L193.8,549.3 L188.2,549.6 L182.9,549.6 L177.8,549.2 L172.7,548.3 L167.5,546.8 L162.1,544.7 L156.6,542.1 L151.1,539.0 L145.8,535.3 L140.9,531.0 L136.5,526.0 L132.5,520.3 L128.7,513.9 L125.3,506.8 L122.4,499.2 L120.1,491.0 L118.4,482.2 L117.5,472.7 L117.5,462.5 L117.9,451.6 L118.8,440.4 L119.9,429.0 L121.0,417.5 L122.2,405.6 L123.7,393.1 L125.4,380.4 L127.2,367.9 L129.1,356.0 L131.0,345.0 L132.9,335.1 L134.9,325.9 L137.0,317.4 L139.1,309.2 L141.2,301.3 L143.1,293.4 L144.9,285.5 L146.5,277.8 L148.0,270.2 L149.6,263.1 L151.4,256.4 L153.4,250.3 L155.6,244.8 L158.0,239.8 L160.4,235.4 L163.1,231.3 L165.9,227.7 L169.0,224.5 L172.3,221.7 L175.7,219.4 L179.3,217.6 L183.2,216.1 L187.2,214.9 Z" fill="none" stroke="#f848f0" stroke-opacity="0.215" stroke-width="22" filter="url(#blur1)"/>
  <ellipse cx="306" cy="66" rx="26" ry="26" fill="none" stroke="#f848f0" stroke-opacity="0.23" stroke-width="22" filter="url(#blur2)"/>
  <rect x="168" y="774" width="128" height="50" rx="16" fill="#ff50ff" fill-opacity="0.165" filter="url(#blur2)"/>
</svg>
</body></html>
